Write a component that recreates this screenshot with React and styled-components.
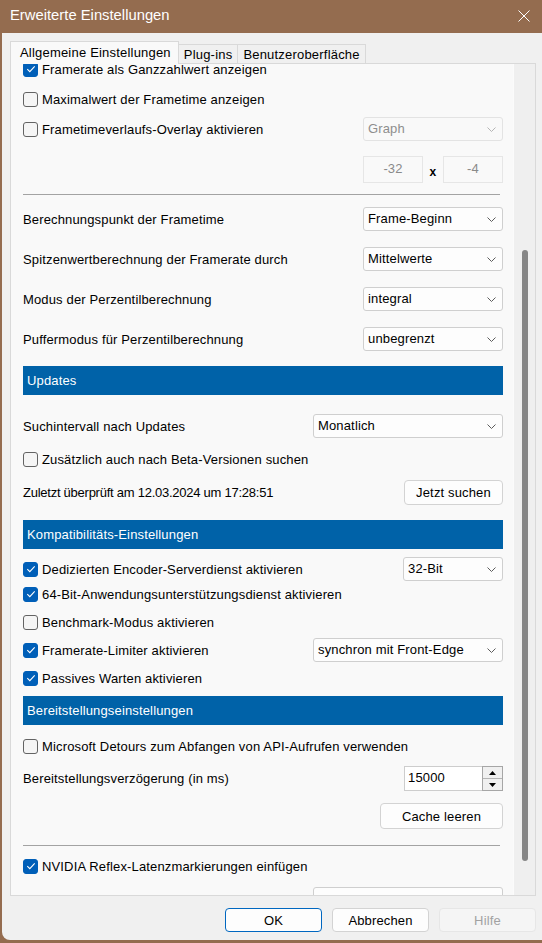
import React from "react";
import styled, { createGlobalStyle, css } from "styled-components";

const GlobalStyle = createGlobalStyle`
  *, *::before, *::after { box-sizing: border-box; }
  html, body { margin: 0; padding: 0; background: #946c4f; }
  body {
    font-family: "Liberation Sans", Arial, sans-serif;
    font-size: 13px;
    letter-spacing: 0.15px;
    color: #000;
  }
`;

const Window = styled.div`
  margin-left: 2px;
  width: 540px;
  height: 940px;
  display: flex;
  flex-direction: column;
`;

const TitleBar = styled.div`
  height: 33px;
  flex: none;
  display: flex;
  align-items: center;
  justify-content: space-between;
  padding: 0 12px 3px 8px;
  color: #fff;
`;

const Title = styled.span`
  font-size: 14.8px;
  letter-spacing: 0;
`;

const CloseIcon = styled.svg`
  width: 12px;
  height: 12px;
  display: block;
  margin-top: 2px;
`;

const Body = styled.div`
  flex: 1;
  background: #f0f0f0;
  border-bottom-left-radius: 8px;
  padding: 8px 6px 0 8px;
  display: flex;
  flex-direction: column;
`;

const TabStrip = styled.div`
  display: flex;
  align-items: flex-end;
  height: 23px;
  margin-bottom: -1px;
  position: relative;
  z-index: 1;
`;

const Tab = styled.div`
  display: flex;
  align-items: center;
  border: 1px solid #d9d9d9;
  letter-spacing: 0.2px;
  ${(p) =>
    p.$active
      ? css`
          height: 23px;
          padding: 0 7px 1px 9px;
          background: #f9f9f9;
          border-bottom: none;
        `
      : css`
          height: 20px;
          padding: 0 5px;
          background: #f0f0f0;
          border-left: none;
        `}
`;

const Pane = styled.div`
  height: 833px;
  flex: none;
  border: 1px solid #d9d9d9;
  background: #f9f9f9;
  display: flex;
`;

const Viewport = styled.div`
  flex: 1;
  overflow: hidden;
`;

/* scrolled down a little: the first row sits partly above the viewport */
const ScrollContent = styled.div`
  margin-top: -9px;
  padding: 0 10px 0 12px;
  display: flex;
  flex-direction: column;
`;

const Track = styled.div`
  width: 22px;
  flex: none;
  background: #efefef;
  border-left: 1px solid #fbfbfb;
`;

const Thumb = styled.div`
  margin: 186px 0 0 8px;
  width: 6px;
  height: 611px;
  border-radius: 3px;
  background: #868686;
`;

const Row = styled.div`
  flex: none;
  display: flex;
  align-items: center;
  justify-content: ${(p) => p.$justify || "space-between"};
  height: ${(p) => p.$h}px;
  margin-top: ${(p) => p.$mt || 0}px;
`;

const Label = styled.span`
  white-space: nowrap;
  letter-spacing: ${(p) => (p.$tight ? "-0.25px" : "inherit")};
`;

const CheckLabel = styled.label`
  display: flex;
  align-items: center;
  gap: 4px;
  white-space: nowrap;
`;

const Box = styled.span`
  width: 15px;
  height: 15px;
  flex: none;
  border-radius: 3px;
  display: flex;
  align-items: center;
  justify-content: center;
  border: 1px solid ${(p) => (p.$checked ? "#005fb8" : "#636363")};
  background: ${(p) => (p.$checked ? "#005fb8" : "#f5f5f5")};
`;

const Tick = styled.svg`
  width: 10px;
  height: 8px;
  display: block;
`;

function Check({ checked, children }) {
  return (
    <CheckLabel>
      <Box $checked={checked}>
        {checked && (
          <Tick viewBox="0 0 10 8">
            <path d="M1.3 4.2 L3.8 6.6 L8.7 1.4" fill="none" stroke="#fff" strokeWidth="1.1" />
          </Tick>
        )}
      </Box>
      {children}
    </CheckLabel>
  );
}

const SelectBox = styled.div`
  width: ${(p) => p.$w}px;
  height: 24px;
  flex: none;
  display: flex;
  align-items: center;
  justify-content: space-between;
  padding: 0 6px 1px 4px;
  border-radius: 3px;
  white-space: nowrap;
  border: 1px solid ${(p) => (p.$disabled ? "#e3e3e3" : "#cfcfcf")};
  background: ${(p) => (p.$disabled ? "#f9f9f9" : "#fdfdfd")};
  color: ${(p) => (p.$disabled ? "#8e8e8e" : "#000")};
`;

const Chevron = styled.svg`
  width: 9px;
  height: 5px;
  display: block;
  margin-top: 1px;
`;

function Select({ w, value, disabled }) {
  return (
    <SelectBox $w={w} $disabled={disabled}>
      <span>{value}</span>
      <Chevron viewBox="0 0 9 5">
        <path d="M0.5 0.5 L4.5 4.5 L8.5 0.5" fill="none" stroke={disabled ? "#b5b5b5" : "#5c5c5c"} strokeWidth="1" />
      </Chevron>
    </SelectBox>
  );
}

const SizeGroup = styled.div`
  display: flex;
  align-items: center;
`;

const NumberField = styled.div`
  width: 60px;
  height: 27px;
  display: flex;
  justify-content: center;
  padding-top: 4px;
  border: 1px solid #e6e6e6;
  background: #f9f9f9;
  color: #8a8a8a;
`;

const Times = styled.span`
  width: 20px;
  text-align: center;
  font-weight: bold;
  font-size: 12px;
  padding-top: 4px;
`;

const Separator = styled.div`
  flex: none;
  height: 1px;
  margin: ${(p) => p.$mt}px 3px 0 0;
  background: #a3a3a3;
`;

const SectionHeader = styled.div`
  flex: none;
  height: 29px;
  margin-top: ${(p) => p.$mt}px;
  padding: 0 0 1px 4px;
  display: flex;
  align-items: center;
  background: #0062a8;
  color: #fff;
`;

const Button = styled.button`
  width: ${(p) => p.$w}px;
  height: ${(p) => p.$h || 24}px;
  flex: none;
  padding: 0;
  border-radius: 4px;
  font: inherit;
  letter-spacing: inherit;
  border: 1px solid #d3d3d3;
  background: #fdfdfd;
  color: #000;
  ${(p) =>
    p.$variant === "primary" &&
    css`
      border-color: #0067c0;
    `}
  ${(p) =>
    p.$variant === "disabled" &&
    css`
      border-color: #e6e6e6;
      background: #f5f5f5;
      color: #a2a2a2;
    `}
`;

const Spin = styled.div`
  width: 99px;
  height: 25px;
  display: flex;
`;

const SpinInput = styled.div`
  flex: 1;
  display: flex;
  align-items: center;
  padding: 0 0 2px 3px;
  border: 1px solid #cdcdcd;
  border-right: none;
  background: #fff;
`;

const SpinButtons = styled.div`
  width: 21px;
  display: flex;
  flex-direction: column;
  border: 1px solid #a6a6a6;
  background: #e9e9e9;
`;

const SpinArrow = styled.div`
  flex: 1;
  display: flex;
  align-items: center;
  justify-content: center;
  background: #f0f0f0;
  & + & {
    border-top: 1px solid #b4b4b4;
  }
`;

const Arrow = styled.svg`
  width: 7px;
  height: 4px;
  display: block;
`;

const Footer = styled.div`
  margin-top: 12px;
  display: flex;
  justify-content: flex-end;
  gap: 10px;
`;

export default function App() {
  return (
    <>
      <GlobalStyle />
      <Window>
        <TitleBar>
          <Title>Erweiterte Einstellungen</Title>
          <CloseIcon viewBox="0 0 12 12">
            <path d="M0.5 0.5 L11.5 11.5 M11.5 0.5 L0.5 11.5" stroke="#fff" strokeWidth="1" fill="none" />
          </CloseIcon>
        </TitleBar>
        <Body>
          <TabStrip>
            <Tab $active>Allgemeine Einstellungen</Tab>
            <Tab>Plug-ins</Tab>
            <Tab>Benutzeroberfläche</Tab>
          </TabStrip>
          <Pane>
            <Viewport>
              <ScrollContent>
                <Row $h={28}>
                  <Check checked>Framerate als Ganzzahlwert anzeigen</Check>
                </Row>
                <Row $h={32}>
                  <Check>Maximalwert der Frametime anzeigen</Check>
                </Row>
                <Row $h={28}>
                  <Check>Frametimeverlaufs-Overlay aktivieren</Check>
                  <Select w={140} value="Graph" disabled />
                </Row>
                <Row $h={27} $mt={13} $justify="flex-end">
                  <SizeGroup>
                    <NumberField>-32</NumberField>
                    <Times>x</Times>
                    <NumberField>-4</NumberField>
                  </SizeGroup>
                </Row>
                <Separator $mt={11} />
                <Row $h={40} $mt={4}>
                  <Label>Berechnungspunkt der Frametime</Label>
                  <Select w={140} value="Frame-Beginn" />
                </Row>
                <Row $h={40}>
                  <Label>Spitzenwertberechnung der Framerate durch</Label>
                  <Select w={140} value="Mittelwerte" />
                </Row>
                <Row $h={40}>
                  <Label>Modus der Perzentilberechnung</Label>
                  <Select w={140} value="integral" />
                </Row>
                <Row $h={40}>
                  <Label>Puffermodus für Perzentilberechnung</Label>
                  <Select w={140} value="unbegrenzt" />
                </Row>

                <SectionHeader $mt={7}>Updates</SectionHeader>
                <Row $h={24} $mt={19}>
                  <Label>Suchintervall nach Updates</Label>
                  <Select w={190} value="Monatlich" />
                </Row>
                <Row $h={22} $mt={10}>
                  <Check>Zusätzlich auch nach Beta-Versionen suchen</Check>
                </Row>
                <Row $h={25} $mt={10}>
                  <Label $tight>Zuletzt überprüft am 12.03.2024 um 17:28:51</Label>
                  <Button $w={99} $h={25}>Jetzt suchen</Button>
                </Row>

                <SectionHeader $mt={15}>Kompatibilitäts-Einstellungen</SectionHeader>
                <Row $h={24} $mt={8}>
                  <Check checked>Dedizierten Encoder-Serverdienst aktivieren</Check>
                  <Select w={100} value="32-Bit" />
                </Row>
                <Row $h={26}>
                  <Check checked>64-Bit-Anwendungsunterstützungsdienst aktivieren</Check>
                </Row>
                <Row $h={30}>
                  <Check>Benchmark-Modus aktivieren</Check>
                </Row>
                <Row $h={26}>
                  <Check checked>Framerate-Limiter aktivieren</Check>
                  <Select w={190} value="synchron mit Front-Edge" />
                </Row>
                <Row $h={30}>
                  <Check checked>Passives Warten aktivieren</Check>
                </Row>

                <SectionHeader $mt={3}>Bereitstellungseinstellungen</SectionHeader>
                <Row $h={22} $mt={10}>
                  <Check>Microsoft Detours zum Abfangen von API-Aufrufen verwenden</Check>
                </Row>
                <Row $h={25} $mt={9}>
                  <Label>Bereitstellungsverzögerung (in ms)</Label>
                  <Spin>
                    <SpinInput>15000</SpinInput>
                    <SpinButtons>
                      <SpinArrow>
                        <Arrow viewBox="0 0 7 4">
                          <path d="M0 4 L3.5 0 L7 4 Z" fill="#000" />
                        </Arrow>
                      </SpinArrow>
                      <SpinArrow>
                        <Arrow viewBox="0 0 7 4">
                          <path d="M0 0 L7 0 L3.5 4 Z" fill="#000" />
                        </Arrow>
                      </SpinArrow>
                    </SpinButtons>
                  </Spin>
                </Row>
                <Row $h={26} $mt={12} $justify="flex-end">
                  <Button $w={123} $h={26}>Cache leeren</Button>
                </Row>
                <Separator $mt={16} />
                <Row $h={22} $mt={9}>
                  <Check checked>NVIDIA Reflex-Latenzmarkierungen einfügen</Check>
                </Row>
                <Row $h={24} $mt={10}>
                  <Label>NVIDIA Reflex-Schlafaufrufe einfügen</Label>
                  <Select w={190} value="" />
                </Row>
              </ScrollContent>
            </Viewport>
            <Track>
              <Thumb />
            </Track>
          </Pane>
          <Footer>
            <Button $w={97} $variant="primary">OK</Button>
            <Button $w={97}>Abbrechen</Button>
            <Button $w={97} $variant="disabled">Hilfe</Button>
          </Footer>
        </Body>
      </Window>
    </>
  );
}
